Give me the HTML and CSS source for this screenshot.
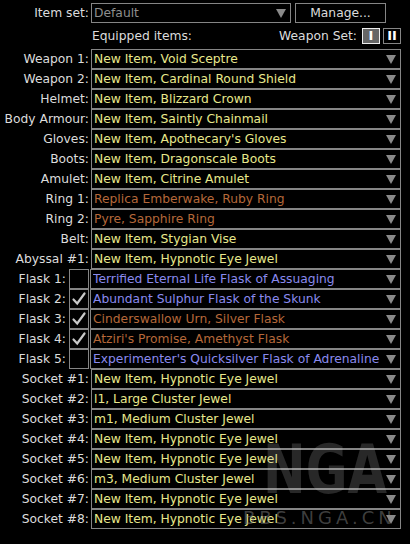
FILE: index.html
```html
<!DOCTYPE html>
<html lang="en">
<head>
  <meta charset="UTF-8">
  <title>Items</title>
  <link rel="stylesheet" href="styles.css">
</head>
<body>

  <div class="panel">
    <div class="top-row">
      <div class="label">Item set:</div>
      <div class="select set-select disabled">
        <span class="value">Default</span>
        <span class="arrow"></span>
      </div>
      <button class="btn manage-btn">Manage...</button>
    </div>

    <div class="equip-row">
      <div class="equip-title">Equipped items:</div>
      <div class="weapon-set">
        <span>Weapon Set:</span>
        <button class="set-btn active">I</button>
        <button class="set-btn">II</button>
      </div>
    </div>

    <div class="slots">
      <div class="slot"><div class="label">Weapon 1:</div><div class="select rare"><span class="value">New Item, Void Sceptre</span><span class="arrow"></span></div></div>
      <div class="slot"><div class="label">Weapon 2:</div><div class="select rare"><span class="value">New Item, Cardinal Round Shield</span><span class="arrow"></span></div></div>
      <div class="slot"><div class="label">Helmet:</div><div class="select rare"><span class="value">New Item, Blizzard Crown</span><span class="arrow"></span></div></div>
      <div class="slot"><div class="label">Body Armour:</div><div class="select rare"><span class="value">New Item, Saintly Chainmail</span><span class="arrow"></span></div></div>
      <div class="slot"><div class="label">Gloves:</div><div class="select rare"><span class="value">New Item, Apothecary's Gloves</span><span class="arrow"></span></div></div>
      <div class="slot"><div class="label">Boots:</div><div class="select rare"><span class="value">New Item, Dragonscale Boots</span><span class="arrow"></span></div></div>
      <div class="slot"><div class="label">Amulet:</div><div class="select rare"><span class="value">New Item, Citrine Amulet</span><span class="arrow"></span></div></div>
      <div class="slot"><div class="label">Ring 1:</div><div class="select unique"><span class="value">Replica Emberwake, Ruby Ring</span><span class="arrow"></span></div></div>
      <div class="slot"><div class="label">Ring 2:</div><div class="select unique"><span class="value">Pyre, Sapphire Ring</span><span class="arrow"></span></div></div>
      <div class="slot"><div class="label">Belt:</div><div class="select rare"><span class="value">New Item, Stygian Vise</span><span class="arrow"></span></div></div>
      <div class="slot"><div class="label">Abyssal #1:</div><div class="select rare"><span class="value">New Item, Hypnotic Eye Jewel</span><span class="arrow"></span></div></div>

      <div class="slot"><div class="label short">Flask 1:</div><div class="check"></div><div class="select magic"><span class="value">Terrified Eternal Life Flask of Assuaging</span><span class="arrow"></span></div></div>
      <div class="slot"><div class="label short">Flask 2:</div><div class="check"><svg viewBox="0 0 18 18" width="18" height="18"><path d="M3.5 9.5 L7.2 13.5 L14.5 3.5" fill="none" stroke="#c8c8c8" stroke-width="2.2" stroke-linecap="round"/></svg></div><div class="select magic"><span class="value">Abundant Sulphur Flask of the Skunk</span><span class="arrow"></span></div></div>
      <div class="slot"><div class="label short">Flask 3:</div><div class="check"><svg viewBox="0 0 18 18" width="18" height="18"><path d="M3.5 9.5 L7.2 13.5 L14.5 3.5" fill="none" stroke="#c8c8c8" stroke-width="2.2" stroke-linecap="round"/></svg></div><div class="select unique"><span class="value">Cinderswallow Urn, Silver Flask</span><span class="arrow"></span></div></div>
      <div class="slot"><div class="label short">Flask 4:</div><div class="check"><svg viewBox="0 0 18 18" width="18" height="18"><path d="M3.5 9.5 L7.2 13.5 L14.5 3.5" fill="none" stroke="#c8c8c8" stroke-width="2.2" stroke-linecap="round"/></svg></div><div class="select unique"><span class="value">Atziri's Promise, Amethyst Flask</span><span class="arrow"></span></div></div>
      <div class="slot"><div class="label short">Flask 5:</div><div class="check"></div><div class="select magic"><span class="value">Experimenter's Quicksilver Flask of Adrenaline</span><span class="arrow"></span></div></div>

      <div class="slot"><div class="label">Socket #1:</div><div class="select rare"><span class="value">New Item, Hypnotic Eye Jewel</span><span class="arrow"></span></div></div>
      <div class="slot"><div class="label">Socket #2:</div><div class="select rare"><span class="value">l1, Large Cluster Jewel</span><span class="arrow"></span></div></div>
      <div class="slot"><div class="label">Socket #3:</div><div class="select rare"><span class="value">m1, Medium Cluster Jewel</span><span class="arrow"></span></div></div>
      <div class="slot"><div class="label">Socket #4:</div><div class="select rare"><span class="value">New Item, Hypnotic Eye Jewel</span><span class="arrow"></span></div></div>
      <div class="slot"><div class="label">Socket #5:</div><div class="select rare"><span class="value">New Item, Hypnotic Eye Jewel</span><span class="arrow"></span></div></div>
      <div class="slot"><div class="label">Socket #6:</div><div class="select rare"><span class="value">m3, Medium Cluster Jewel</span><span class="arrow"></span></div></div>
      <div class="slot"><div class="label">Socket #7:</div><div class="select rare"><span class="value">New Item, Hypnotic Eye Jewel</span><span class="arrow"></span></div></div>
      <div class="slot"><div class="label">Socket #8:</div><div class="select rare"><span class="value">New Item, Hypnotic Eye Jewel</span><span class="arrow"></span></div></div>
    </div>
  </div>

  <div class="watermark">
    <div class="wm-logo">NGA</div>
    <div class="wm-url">BBS.NGA.CN</div>
  </div>

</body>
</html>
```

FILE: styles.css
```css
body {
  margin: 0;
  background: #000;
  color: #dcdcdc;
  font-family: 'DejaVu Sans', sans-serif;
  font-size: 12.3px;
  width: 410px;
  height: 544px;
  overflow: hidden;
  position: relative;
}

.panel {
  padding: 3px 0 0 0;
}

.label {
  width: 89px;
  flex: none;
  text-align: right;
  white-space: nowrap;
  padding-right: 2px;
  line-height: 20px;
}

.label.short {
  width: 66px;
  padding-right: 3px;
}

.top-row {
  display: flex;
  align-items: center;
  height: 20px;
}

.select {
  flex: 1;
  min-width: 0;
  height: 18px;
  border: 1px solid #858585;
  background: #000;
  display: flex;
  align-items: center;
  padding-left: 2px;
  margin-right: 9px;
}

.select .value {
  flex: 1;
  min-width: 0;
  white-space: nowrap;
  overflow: hidden;
  line-height: 18px;
}

.select .arrow {
  flex: none;
  width: 0;
  height: 0;
  border-left: 5px solid transparent;
  border-right: 5px solid transparent;
  border-top: 9px solid #8a8a8a;
  margin: 0 4px 0 1px;
}

.set-select {
  flex: none;
  width: 196px;
  margin-right: 4px;
}

.disabled .value {
  color: #8e8e8e;
}

.btn {
  width: 91px;
  height: 20px;
  background: #000;
  border: 1px solid #858585;
  color: #dcdcdc;
  font-family: 'DejaVu Sans', sans-serif;
  font-size: 12.3px;
  padding: 0;
  line-height: 18px;
}

.equip-row {
  display: flex;
  align-items: center;
  justify-content: space-between;
  height: 26px;
  padding-left: 92px;
  padding-right: 9px;
}

.weapon-set {
  display: flex;
  align-items: center;
  gap: 3px;
}

.weapon-set span {
  margin-right: 2px;
}

.set-btn {
  width: 18px;
  height: 16px;
  background: #000;
  border: 1px solid #858585;
  color: #fff;
  font-family: 'DejaVu Sans', sans-serif;
  font-size: 13px;
  font-weight: bold;
  padding: 0;
  line-height: 14px;
}

.set-btn.active {
  background: #666;
  border-color: #eee;
}

.slots {
  display: flex;
  flex-direction: column;
}

.slot {
  display: flex;
  align-items: center;
  height: 20px;
}

.check {
  flex: none;
  width: 18px;
  height: 18px;
  border: 1px solid #858585;
  background: #000;
  margin-right: 1px;
}

.check svg {
  display: block;
}

.rare .value {
  color: #e8e88c;
}

.unique .value {
  color: #b5683a;
}

.magic .value {
  color: #8a8aee;
}

.watermark {
  position: absolute;
  left: 243px;
  top: 436px;
  pointer-events: none;
  white-space: nowrap;
}

.wm-logo {
  font-family: 'DejaVu Sans', sans-serif;
  font-weight: bold;
  font-size: 68px;
  line-height: 68px;
  color: rgba(200, 200, 200, 0.2);
  transform: scaleX(0.75);
  transform-origin: left;
  margin-left: 20px;
}

.wm-url {
  font-family: 'DejaVu Sans', sans-serif;
  font-size: 18px;
  line-height: 18px;
  letter-spacing: 4px;
  color: rgba(140, 140, 140, 0.45);
  margin-top: 5px;
}
```
